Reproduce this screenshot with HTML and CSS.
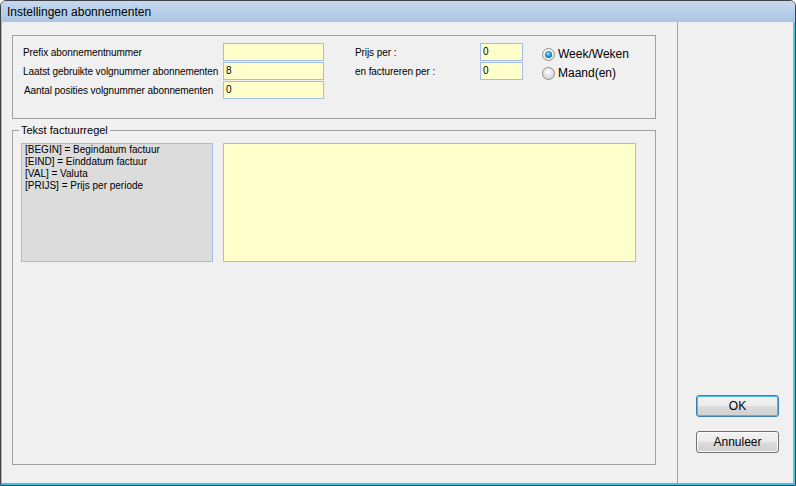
FILE: index.html
```html
<!DOCTYPE html>
<html lang="nl">
<head>
<meta charset="utf-8">
<title>Instellingen abonnementen</title>
<link rel="stylesheet" href="styles.css">
</head>
<body>
<div class="window">
  <div class="titlebar">Instellingen abonnementen</div>
  <div class="body">
    <div class="main">
      <div class="group settings">
        <div class="fields fields-left">
          <span class="lbl">Prefix abonnementnummer</span><span class="input"></span>
          <span class="lbl">Laatst gebruikte volgnummer abonnementen</span><span class="input">8</span>
          <span class="lbl indent">Aantal posities volgnummer abonnementen</span><span class="input">0</span>
        </div>
        <div class="fields fields-right">
          <span class="lbl">Prijs per :</span><span class="input">0</span>
          <span class="lbl">en factureren per :</span><span class="input">0</span>
        </div>
        <div class="radios">
          <div class="radio"><span class="dot checked"><span class="pip"></span></span>Week/Weken</div>
          <div class="radio"><span class="dot"></span>Maand(en)</div>
        </div>
      </div>
      <fieldset class="group text-group">
        <legend>Tekst factuurregel</legend>
        <div class="codes">
          <div>[BEGIN] = Begindatum factuur</div>
          <div>[EIND] = Einddatum factuur</div>
          <div>[VAL] = Valuta</div>
          <div>[PRIJS] = Prijs per periode</div>
        </div>
        <div class="textarea"></div>
      </fieldset>
    </div>
    <div class="side">
      <button class="btn default">OK</button>
      <button class="btn">Annuleer</button>
    </div>
  </div>
</div>
</body>
</html>
```

FILE: styles.css
```css
html, body {
  margin: 0;
  padding: 0;
}
body {
  width: 796px;
  height: 486px;
  overflow: hidden;
  background: #ffffff;
  font-family: "Liberation Sans", Arial, sans-serif;
  color: #000;
}
.window {
  box-sizing: border-box;
  width: 796px;
  height: 486px;
  border: 1px solid #3f4246;
  border-radius: 6px 6px 0 0;
  background: #f0f0f0;
  display: flex;
  flex-direction: column;
  overflow: hidden;
}
.titlebar {
  flex: none;
  height: 21px;
  padding-left: 6px;
  font-size: 12px;
  line-height: 23px;
  background: linear-gradient(#c6d9ee, #aac5e3);
  white-space: nowrap;
}
.body {
  flex: 1;
  min-height: 0;
  display: flex;
  border-left: 1px solid #8db8e2;
  border-right: 2px solid #55c5ea;
  border-bottom: 2px solid #3fc1ea;
}
.main {
  box-sizing: border-box;
  width: 675px;
  flex: none;
  display: flex;
  flex-direction: column;
  padding-left: 10px;
}
.group {
  box-sizing: border-box;
  width: 644px;
  border: 1px solid #a0a0a0;
}
.settings {
  flex: none;
  margin-top: 13px;
  height: 84px;
  padding: 7px 0 0 10px;
  display: flex;
  align-items: flex-start;
}
.fields {
  display: grid;
  row-gap: 1px;
  grid-auto-rows: 18px;
  align-items: center;
}
.fields-left {
  grid-template-columns: 200px 101px;
  margin-right: 31px;
}
.fields-right {
  grid-template-columns: 125px 43px;
  margin-right: 19px;
}
.lbl {
  font-size: 10px;
  letter-spacing: -0.08px;
  white-space: nowrap;
  line-height: 12px;
  padding-top: 1px;
}
.lbl.indent {
  padding-left: 1px;
}
.input {
  box-sizing: border-box;
  height: 18px;
  border: 1px solid #a3bde9;
  background: #ffffcc;
  font-size: 10px;
  line-height: 16px;
  padding-left: 2px;
}
.radios {
  margin-top: 2px;
  display: flex;
  flex-direction: column;
  row-gap: 1px;
}
.radio {
  display: flex;
  align-items: center;
  height: 18px;
  font-size: 12px;
  white-space: nowrap;
}
.dot {
  box-sizing: border-box;
  width: 13px;
  height: 13px;
  border-radius: 50%;
  border: 1px solid #8f9090;
  background: radial-gradient(circle at 45% 35%, #ffffff 0%, #e6e6e6 45%, #c8c8c8 100%);
  margin-right: 3px;
  display: flex;
  align-items: center;
  justify-content: center;
}
.dot.checked {
  background: radial-gradient(circle at 45% 35%, #ffffff 0%, #ececec 60%, #d6d6d6 100%);
}
.pip {
  width: 7px;
  height: 7px;
  border-radius: 50%;
  background: radial-gradient(circle at 45% 40%, #a5eaff 0%, #2a9fd8 40%, #145c98 75%, #0c3a66 100%);
}
.text-group {
  flex: 1;
  min-width: 0;
  margin: 5px 0 18px 0;
  padding: 6px 0 0 8px;
  display: flex;
  align-items: flex-start;
  column-gap: 9px;
}
.text-group legend {
  font-size: 11px;
  line-height: 13px;
  padding: 0 2px;
  margin-left: -2px;
}
.codes {
  box-sizing: border-box;
  width: 192px;
  height: 119px;
  flex: none;
  border: 1px solid #a3bde9;
  background: #dcdcdc;
  padding: 0 3px;
  font-size: 10px;
  line-height: 12px;
  white-space: nowrap;
}
.textarea {
  box-sizing: border-box;
  width: 413px;
  height: 119px;
  flex: none;
  margin-left: 1px;
  border: 1px solid #a3bde9;
  background: #ffffcc;
}
.side {
  flex: 1;
  border-left: 1px solid #a0a0a0;
  display: flex;
  flex-direction: column;
  justify-content: flex-end;
  align-items: flex-start;
  row-gap: 14px;
  padding: 0 0 30px 18px;
}
.btn {
  box-sizing: border-box;
  width: 83px;
  height: 22px;
  margin: 0;
  padding: 0;
  font-family: "Liberation Sans", Arial, sans-serif;
  font-size: 12px;
  color: #000;
  border: 1px solid #707070;
  border-radius: 3px;
  background: linear-gradient(#f2f2f2 0%, #ebebeb 50%, #dddddd 50%, #cfcfcf 100%);
  box-shadow: inset 0 0 0 1px #fbfbfb;
}
.btn.default {
  border-color: #3c7fb1;
  box-shadow: inset 0 0 0 1px #48bdf0;
}
```
